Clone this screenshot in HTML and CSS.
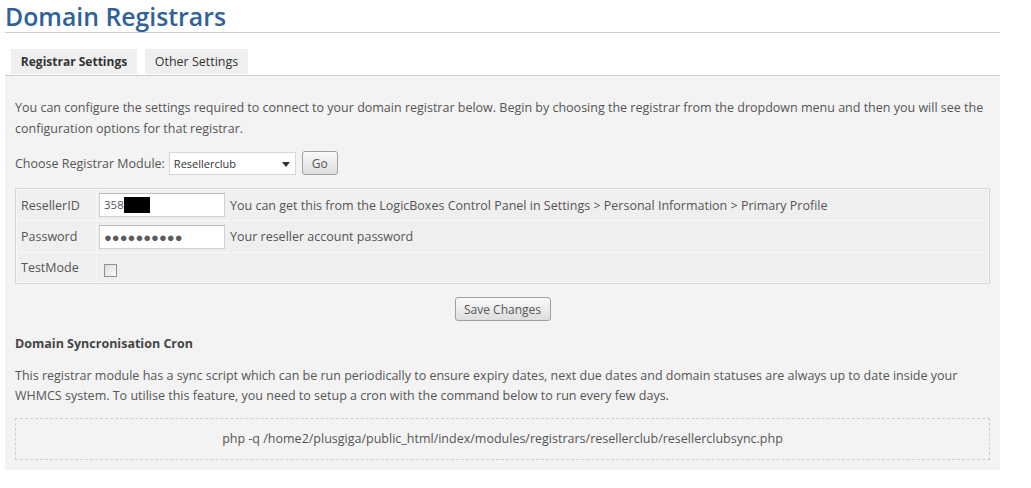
FILE: index.html
```html
<!DOCTYPE html>
<html>
<head>
<meta charset="utf-8">
<link rel="stylesheet" href="styles.css">
</head>
<body>
<div class="page">
  <h1 class="title">Domain Registrars</h1>
  <div class="tabs">
    <div class="tab active">Registrar Settings</div>
    <div class="tab other">Other Settings</div>
  </div>
  <div class="panel">
    <p class="intro">You can configure the settings required to connect to your domain registrar below. Begin by choosing the registrar from the dropdown menu and then you will see the configuration options for that registrar.</p>
    <div class="choose">
      <span>Choose Registrar Module:</span>
      <div class="select">
        <span>Resellerclub</span>
        <svg class="arrow" width="8" height="5" viewBox="0 0 8 5"><path d="M0 0H8L4 5Z" fill="#333"/></svg>
      </div>
      <button class="btn go">Go</button>
    </div>
    <table class="form">
      <tr>
        <td class="label">ResellerID</td>
        <td class="field"><div class="input">358<span class="redact"></span></div><span class="desc">You can get this from the LogicBoxes Control Panel in Settings &gt; Personal Information &gt; Primary Profile</span></td>
      </tr>
      <tr>
        <td class="label">Password</td>
        <td class="field"><div class="input dots">●●●●●●●●●●</div><span class="desc">Your reseller account password</span></td>
      </tr>
      <tr>
        <td class="label">TestMode</td>
        <td class="field"><span class="check"></span></td>
      </tr>
    </table>
    <div class="save-row"><button class="btn save">Save Changes</button></div>
    <h3 class="subhead">Domain Syncronisation Cron</h3>
    <p class="sync">This registrar module has a sync script which can be run periodically to ensure expiry dates, next due dates and domain statuses are always up to date inside your WHMCS system. To utilise this feature, you need to setup a cron with the command below to run every few days.</p>
    <div class="cmd">php -q /home2/plusgiga/public_html/index/modules/registrars/resellerclub/resellerclubsync.php</div>
  </div>
</div>
</body>
</html>
```

FILE: styles.css
```css
html, body {
  margin: 0;
  padding: 0;
  background: #fff;
}
body {
  font-family: "Open Sans", "Noto Sans", sans-serif;
  font-size: 12.5px;
  color: #555;
}
.page {
  width: 995px;
  margin-left: 5px;
}
.title {
  margin: 0;
  padding-top: 1px;
  font-size: 24.8px;
  line-height: 31px;
  font-weight: 600;
  color: #30629a;
  border-bottom: 1px solid #cfcfcf;
}
.tabs {
  display: flex;
  gap: 8px;
  padding-left: 6px;
  margin-top: 16px;
  border-bottom: 1px solid #cfcfcf;
}
.tab {
  box-sizing: border-box;
  height: 25px;
  line-height: 25px;
  text-align: center;
  white-space: nowrap;
  background: #efefef;
  color: #333;
  margin-bottom: 1px;
}
.tab.active {
  font-weight: 700;
  font-size: 12px;
  width: 126px;
}
.tab.other {
  width: 103px;
}
.panel {
  background: #f3f3f3;
  padding: 21px 10px 10px;
}
.intro {
  margin: 0;
  line-height: 21px;
}
.choose {
  margin-top: 12px;
  display: flex;
  align-items: center;
  height: 24px;
}
.select {
  position: relative;
  margin-left: 4px;
  box-sizing: border-box;
  width: 127px;
  height: 23px;
  line-height: 21px;
  padding-left: 4px;
  background: #fff;
  border: 1px solid #d8d8d8;
  font-size: 11px;
  color: #333;
}
.arrow {
  position: absolute;
  right: 5px;
  top: 9px;
}
.btn {
  font-family: inherit;
  color: #555;
  border: 1px solid #a0a0a0;
  border-radius: 3px;
  background: linear-gradient(#fafafa, #dedede);
  padding: 0;
}
.go {
  margin-left: 6px;
  width: 36px;
  height: 24px;
  font-size: 12px;
}
.form {
  margin-top: 13px;
  width: 975px;
  border: 1px solid #d6d6d6;
  border-spacing: 1px;
  background: #f8f8f8;
}
.form td {
  background: #efefef;
  height: 31px;
  padding: 0;
}
.form tr:first-child td { height: 30px; }
.form tr:last-child td { height: 29px; }
.label {
  width: 75px;
  padding-left: 4px !important;
  color: #555;
}
.field {
  padding-left: 2px !important;
}
.input {
  display: inline-block;
  vertical-align: middle;
  box-sizing: border-box;
  width: 126px;
  height: 24px;
  line-height: 22px;
  padding-left: 4px;
  background: #fff;
  border: 1px solid #d0d0d0;
  border-top-color: #bdbdbd;
  color: #555;
  font-size: 11.5px;
}
.redact {
  display: inline-block;
  width: 26px;
  height: 16px;
  background: #000;
  vertical-align: -4px;
}
.dots {
  font-size: 13px;
  letter-spacing: 0;
  color: #5a5a5a;
}
.desc {
  margin-left: 5px;
  vertical-align: middle;
}
.check {
  display: inline-block;
  box-sizing: border-box;
  width: 13px;
  height: 13px;
  margin-left: 5px;
  margin-top: 6px;
  border: 1px solid #8f8f8f;
  background: linear-gradient(135deg, #dcdcdc, #fbfbfb);
  vertical-align: middle;
}
.save-row {
  display: flex;
  justify-content: center;
  margin-top: 13px;
}
.save {
  width: 96px;
  height: 24px;
  font-size: 12px;
}
.subhead {
  margin: 13px 0 0;
  font-size: 12.5px;
  line-height: 20px;
  font-weight: 700;
  color: #444;
}
.sync {
  margin: 12px 0 0;
  line-height: 20px;
}
.cmd {
  margin-top: 12px;
  height: 40px;
  line-height: 40px;
  border: 1px dashed #cfcfcf;
  text-align: center;
  color: #555;
}
```
